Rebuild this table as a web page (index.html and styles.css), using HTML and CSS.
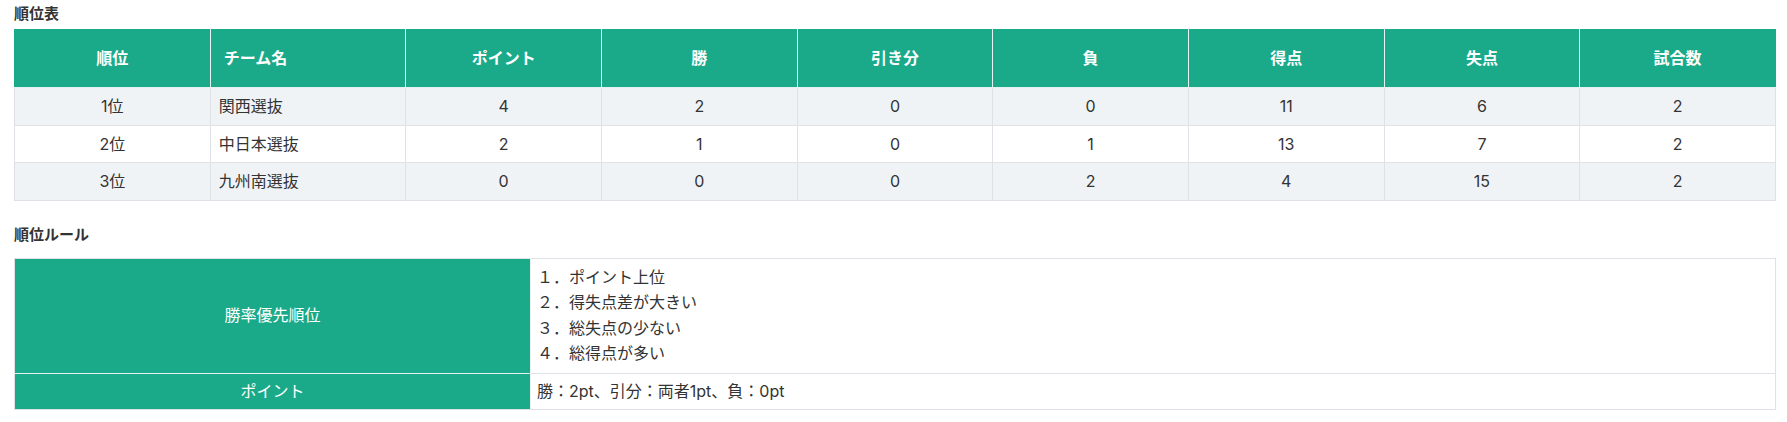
FILE: index.html
```html
<!DOCTYPE html>
<html lang="ja">
<head>
<meta charset="utf-8">
<title>順位表</title>
<link rel="stylesheet" href="styles.css">
</head>
<body>
<main class="page">
  <h2 class="section-title first">順位表</h2>
  <table class="standings">
    <thead>
      <tr>
        <th>順位</th>
        <th class="left">チーム名</th>
        <th>ポイント</th>
        <th>勝</th>
        <th>引き分</th>
        <th>負</th>
        <th>得点</th>
        <th>失点</th>
        <th>試合数</th>
      </tr>
    </thead>
    <tbody>
      <tr>
        <td>1位</td><td class="left">関西選抜</td><td>4</td><td>2</td><td>0</td><td>0</td><td>11</td><td>6</td><td>2</td>
      </tr>
      <tr>
        <td>2位</td><td class="left">中日本選抜</td><td>2</td><td>1</td><td>0</td><td>1</td><td>13</td><td>7</td><td>2</td>
      </tr>
      <tr>
        <td>3位</td><td class="left">九州南選抜</td><td>0</td><td>0</td><td>0</td><td>2</td><td>4</td><td>15</td><td>2</td>
      </tr>
    </tbody>
  </table>

  <h2 class="section-title second">順位ルール</h2>
  <table class="rules">
    <tbody>
      <tr>
        <th>勝率優先順位</th>
        <td>
          <ol class="rule-list">
            <li>１．ポイント上位</li>
            <li>２．得失点差が大きい</li>
            <li>３．総失点の少ない</li>
            <li>４．総得点が多い</li>
          </ol>
        </td>
      </tr>
      <tr class="compact">
        <th>ポイント</th>
        <td>勝：2pt、引分：両者1pt、負：0pt</td>
      </tr>
    </tbody>
  </table>
</main>
</body>
</html>
```

FILE: styles.css
```css
html, body {
  margin: 0;
  padding: 0;
  background: #ffffff;
}

body {
  font-family: "Inter", "Noto Sans CJK JP", sans-serif;
  color: #333333;
  font-size: 16px;
}

.page {
  padding: 0 11px 0 14px;
}

.section-title {
  font-size: 15px;
  font-weight: 700;
  line-height: 22px;
  color: #333333;
  margin: 0;
}

.section-title.first {
  margin: 3px 0 4px;
}

.section-title.second {
  margin: 23px 0 12px;
}

table {
  width: 100%;
  border-collapse: collapse;
  table-layout: fixed;
}

.standings th,
.standings td {
  border: 1px solid #dee2e6;
  text-align: center;
}

.standings th {
  background: #1aaa8a;
  color: #ffffff;
  font-weight: 700;
  font-size: 16px;
  line-height: 25px;
  padding: 16px 12px;
  border-color: #e6f2ef;
  border-top-color: #1aaa8a;
}

.standings th:first-child {
  border-left-color: #1aaa8a;
}

.standings th:last-child {
  border-right-color: #1aaa8a;
}

.standings td {
  font-size: 16px;
  line-height: 24.5px;
  padding: 6px 8px;
}

.standings .left {
  text-align: left;
}

.standings th.left {
  padding-left: 13px;
}

.standings tbody tr:nth-child(odd) td {
  background: #f0f3f6;
}

.rules th,
.rules td {
  border: 1px solid #dee2e6;
  font-size: 16px;
  line-height: 25.5px;
  padding: 6px;
}

.rules .compact th,
.rules .compact td {
  padding-top: 5px;
  padding-bottom: 5px;
}

.rules th {
  width: 503px;
  background: #1aaa8a;
  color: #ffffff;
  font-weight: 400;
  text-align: center;
  vertical-align: middle;
  border-color: #e6f2ef;
  border-left-color: #dee2e6;
}

.rules tr:first-child th {
  border-top-color: #dee2e6;
}

.rules tr:last-child th {
  border-bottom-color: #dee2e6;
}

.rules td {
  text-align: left;
  vertical-align: middle;
}

.rule-list {
  list-style: none;
  margin: 0;
  padding: 0;
}
```
